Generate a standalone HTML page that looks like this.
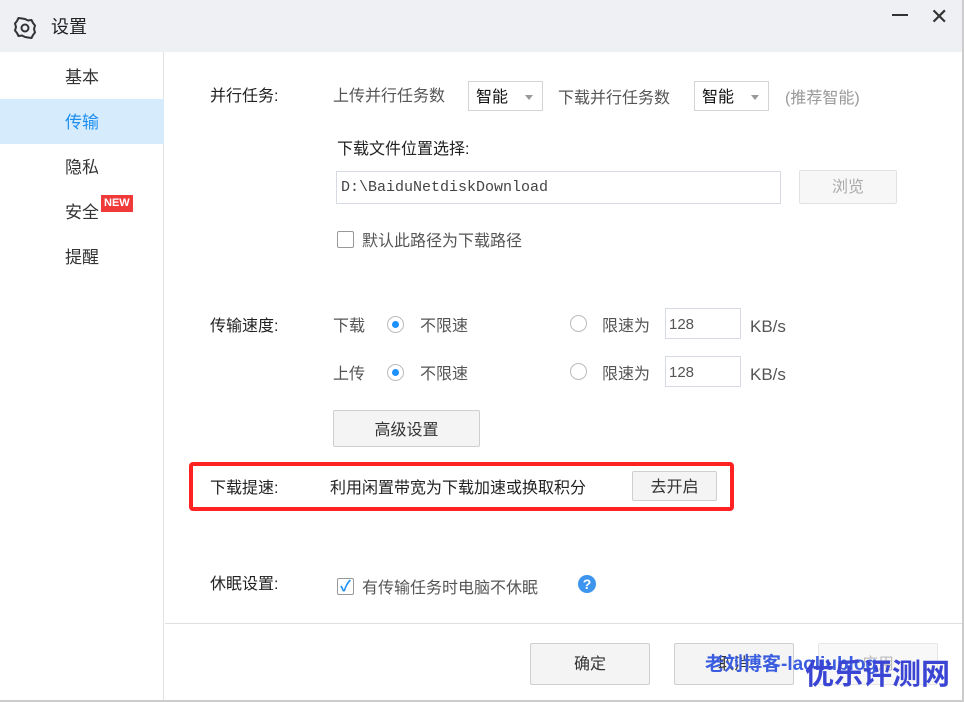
<!DOCTYPE html>
<html><head><meta charset="utf-8"><style>
*{margin:0;padding:0;box-sizing:border-box}
body{width:964px;height:702px;background:#fff;font-family:"Liberation Sans","Noto Sans CJK SC",sans-serif;font-size:16px;line-height:1.3;color:#333;position:relative;overflow:hidden}
.a{position:absolute;white-space:nowrap}
.lbl{color:#222;margin-top:2px}
.g{color:#555;margin-top:2px}
.s{margin-top:2px}
.sel{position:absolute;height:30px;border:1px solid #d4d4d4;background:#fff;padding:6px 0 0 7px;color:#111}
.sel:after{content:"";position:absolute;right:9px;top:13px;border:4px solid transparent;border-top:5px solid #999}
.btn{position:absolute;border:1px solid #cfcfcf;background:#f4f4f4;border-radius:2px;text-align:center;color:#333}
.radio{position:absolute;width:17px;height:17px;border:1px solid #bbb;border-radius:50%;background:#fff}
.radio.on:after{content:"";position:absolute;left:4px;top:4px;width:7px;height:7px;border-radius:50%;background:#1e90ff}
.inp{position:absolute;border:1px solid #d6dbe3;background:#fff;color:#555}
</style></head><body>
<div class="a" style="left:0;top:0;width:964px;height:52px;background:#eef0f4"></div>
<svg class="a" style="left:14px;top:17px" width="22" height="22" viewBox="0 0 22 22"><path d="M11 2l3 1.5 3.5-.5 1.5 3 2 2.5-1 3.5 1 3.5-2 2.5-1.5 3-3.5-.5L11 20l-3-1.5-3.5.5-1.5-3-2-2.5 1-3.5-1-3.5 2-2.5 1.5-3 3.5.5z" fill="none" stroke="#333" stroke-width="2" stroke-linejoin="round"/><circle cx="11" cy="11" r="3.5" fill="none" stroke="#333" stroke-width="2"/></svg>
<div class="a" style="left:51px;top:16px;font-size:18px;color:#222">设置</div>
<div class="a" style="left:892px;top:14px;width:16px;height:2px;background:#333"></div>
<div class="a" style="left:930px;top:3px;font-size:22px;color:#333">✕</div>
<div class="a" style="left:0;top:52px;width:164px;height:650px;background:#fff;border-right:1px solid #e3e3e3"></div>
<div class="a" style="left:0;top:99px;width:164px;height:45px;background:#d6ecfd"></div>
<div class="a s" style="left:65px;top:65px;font-size:17px">基本</div>
<div class="a s" style="left:65px;top:110px;font-size:17px;color:#1e8ff0">传输</div>
<div class="a s" style="left:65px;top:155px;font-size:17px">隐私</div>
<div class="a s" style="left:65px;top:200px;font-size:17px">安全</div>
<div class="a" style="left:101px;top:195px;height:17px;background:#f03a3a;color:#fff;font-size:11px;font-weight:bold;padding:0 3px;line-height:17px">NEW</div>
<div class="a s" style="left:65px;top:245px;font-size:17px">提醒</div>
<div class="a" style="left:962px;top:0;width:2px;height:702px;background:#ccc"></div>
<div class="a" style="left:0;top:700px;width:964px;height:2px;background:#ccc"></div>

<div class="a lbl" style="left:210px;top:85px">并行任务:</div>
<div class="a g" style="left:333px;top:85px">上传并行任务数</div>
<div class="sel" style="left:468px;top:81px;width:75px">智能</div>
<div class="a g" style="left:558px;top:87px">下载并行任务数</div>
<div class="sel" style="left:694px;top:81px;width:75px">智能</div>
<div class="a g" style="left:785px;top:87px;color:#999">(推荐智能)</div>
<div class="a lbl" style="left:337px;top:138px">下载文件位置选择:</div>
<div class="inp" style="left:336px;top:171px;width:445px;height:33px;font-family:'Liberation Mono',monospace;font-size:15px;padding:6px 0 0 4px;color:#444">D:\BaiduNetdiskDownload</div>
<div class="btn" style="left:799px;top:170px;width:98px;height:34px;padding-top:7px;color:#aaa;background:#f7f7f7;border-color:#e2e2e2">浏览</div>
<div class="a" style="left:337px;top:231px;width:17px;height:17px;border:1px solid #999;border-radius:2px"></div>
<div class="a g" style="left:362px;top:230px">默认此路径为下载路径</div>

<div class="a lbl" style="left:210px;top:315px">传输速度:</div>
<div class="a g" style="left:333px;top:315px">下载</div>
<div class="radio on" style="left:387px;top:316px"></div>
<div class="a g" style="left:420px;top:315px">不限速</div>
<div class="radio" style="left:570px;top:315px"></div>
<div class="a g" style="left:602px;top:315px">限速为</div>
<div class="inp" style="left:665px;top:308px;width:76px;height:31px;padding:6px 0 0 3px;font-size:15px">128</div>
<div class="a g" style="left:750px;top:314px;font-size:17px">KB/s</div>
<div class="a g" style="left:333px;top:363px">上传</div>
<div class="radio on" style="left:387px;top:364px"></div>
<div class="a g" style="left:420px;top:363px">不限速</div>
<div class="radio" style="left:570px;top:363px"></div>
<div class="a g" style="left:602px;top:363px">限速为</div>
<div class="inp" style="left:665px;top:356px;width:76px;height:31px;padding:6px 0 0 3px;font-size:15px">128</div>
<div class="a g" style="left:750px;top:362px;font-size:17px">KB/s</div>
<div class="btn" style="left:333px;top:410px;width:147px;height:37px;padding-top:10px">高级设置</div>

<div class="a" style="left:189px;top:462px;width:545px;height:49px;border:4px solid #ff2222;border-radius:4px"></div>
<div class="a lbl" style="left:210px;top:477px">下载提速:</div>
<div class="a lbl" style="left:330px;top:477px">利用闲置带宽为下载加速或换取积分</div>
<div class="btn" style="left:632px;top:471px;width:85px;height:30px;padding-top:6px">去开启</div>

<div class="a lbl" style="left:210px;top:573px">休眠设置:</div>
<div class="a" style="left:337px;top:578px;width:17px;height:17px;border:1px solid #999;border-radius:2px;color:#1e8ff0;font-size:15px;line-height:15px;text-align:center;font-weight:bold">✓</div>
<div class="a g" style="left:362px;top:577px">有传输任务时电脑不休眠</div>
<div class="a" style="left:578px;top:575px;width:18px;height:18px;border-radius:50%;background:#3d95f0;color:#fff;font-size:14px;font-weight:bold;text-align:center;line-height:18px">?</div>

<div class="a" style="left:165px;top:623px;width:797px;height:1px;background:#e0e0e0"></div>
<div class="btn" style="left:530px;top:643px;width:120px;height:42px;padding-top:11px">确定</div>
<div class="btn" style="left:674px;top:643px;width:120px;height:42px;padding-top:11px">取消</div>
<div class="btn" style="left:818px;top:643px;width:120px;height:42px;padding-top:11px;color:#bbb;background:#f8f8f8;border-color:#e6e6e6">应用</div>
<div class="a" style="left:705px;top:653px;font-size:19px;font-weight:bold;color:#3b5ee0">老刘博客-laoliublog</div>
<div class="a" style="left:805px;top:657px;font-size:29px;font-weight:bold;color:#3b45d4">优乐评测网</div>
</body></html>
